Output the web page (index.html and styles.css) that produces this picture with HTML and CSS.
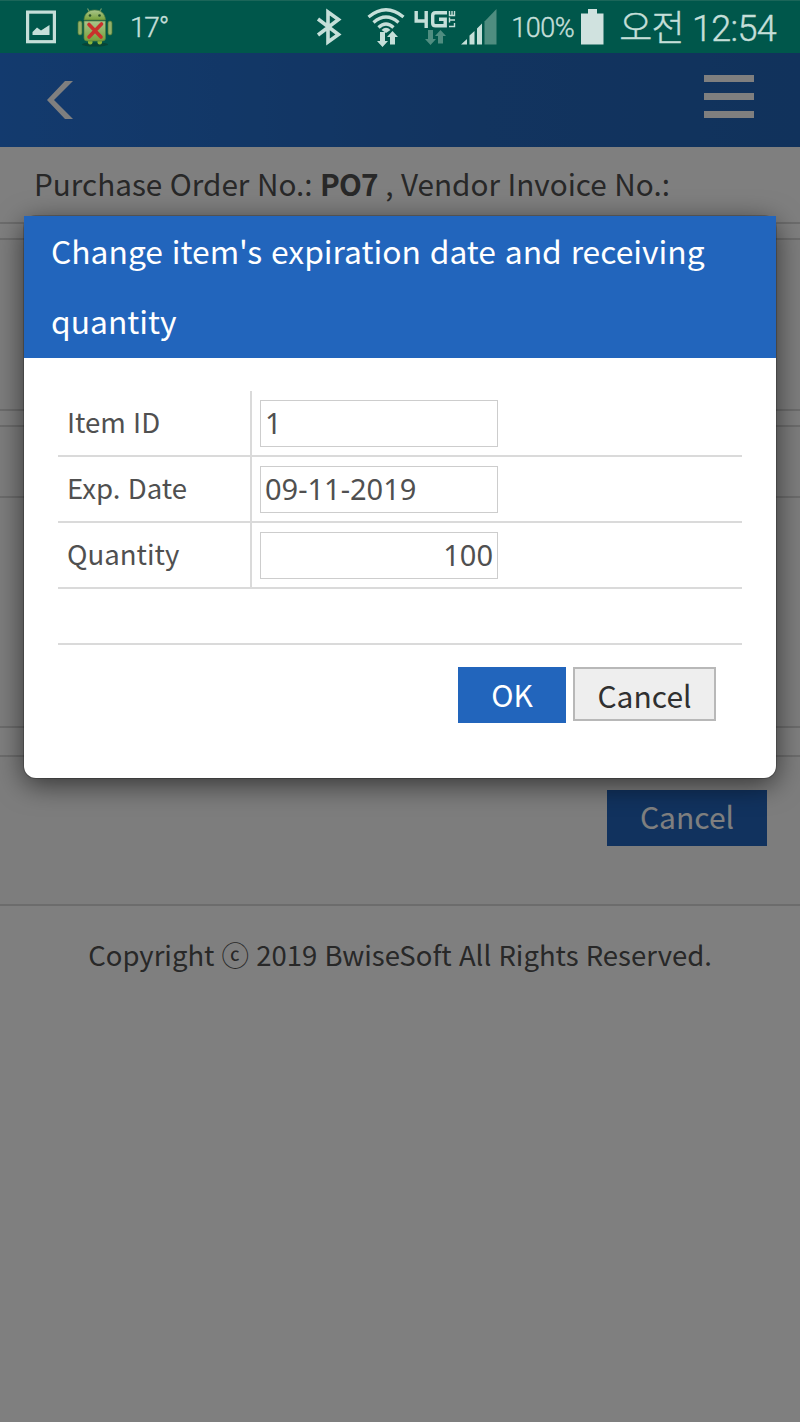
FILE: index.html
```html
<!DOCTYPE html>
<html lang="en">
<head>
  <meta charset="UTF-8">
  <meta name="viewport" content="width=device-width, initial-scale=1.0">
  <title>Receiving</title>
  <link rel="stylesheet" href="styles.css">
</head>
<body>

  <div class="status-bar">
    <svg class="icon-picture" width="30" height="34" viewBox="0 0 30 34">
      <rect x="1.6" y="2.1" width="26.8" height="29.6" fill="none" stroke="#c5dfd9" stroke-width="3.2"/>
      <path d="M6.500 25V22L11 17.500L15 20.500L23.500 15V25Z" fill="#c5dfd9"/>
    </svg>
    <svg class="icon-android" width="36" height="40" viewBox="0 0 36 40">
      <defs>
        <linearGradient id="droid" x1="0" y1="0" x2="0" y2="1">
          <stop offset="0" stop-color="#a9c48c"/>
          <stop offset="1" stop-color="#78a13a"/>
        </linearGradient>
      </defs>
      <ellipse cx="18" cy="37.500" rx="13" ry="2" fill="#064537"/>
      <path d="M10.500 1.500L12.500 5M24.500 1.500L22.500 5" stroke="#6f9a6a" stroke-width="1.200"/>
      <path d="M7 13C7.500 6 12 3 17.700 3S28 6 28.500 13Z" fill="url(#droid)" stroke="#58803f" stroke-width=".7"/>
      <circle cx="13" cy="8.500" r="1.300" fill="#28502a"/>
      <circle cx="22.500" cy="8.500" r="1.300" fill="#28502a"/>
      <rect x="1" y="14" width="4" height="14" rx="2" fill="#93b06a" stroke="#557b30" stroke-width=".7"/>
      <rect x="31" y="14" width="4" height="14" rx="2" fill="#93b06a" stroke="#557b30" stroke-width=".7"/>
      <rect x="11" y="32" width="4.500" height="5.500" rx="2" fill="#8ab53a"/>
      <rect x="20.500" y="32" width="4.500" height="5.500" rx="2" fill="#8ab53a"/>
      <path d="M7 14H28.500V31Q28.500 34 25.500 34H10Q7 34 7 31Z" fill="url(#droid)" stroke="#58803f" stroke-width=".7"/>
      <path d="M12 17.500L24 30M24.500 17L12 30" stroke="#c9302c" stroke-width="3.600" stroke-linecap="round"/>
    </svg>
    <span class="temperature">17°</span>

    <div class="status-right">
      <svg class="icon-bluetooth" width="26" height="38" viewBox="0 0 26 38">
        <path d="M2 11L22.500 26.500L12 34V4L22.500 11.500L2 27" fill="none" stroke="#c5dfd9" stroke-width="3.600"/>
      </svg>
      <svg class="icon-wifi" width="38" height="40" viewBox="0 0 38 40">
        <g fill="none" stroke="#c5dfd9" stroke-width="3.300">
          <path d="M1.500 10Q19-4.500 36.500 10"/>
          <path d="M6.500 15.500Q19 4.500 31.500 15.500"/>
          <path d="M11.500 20.500Q19 13.500 26.500 20.500"/>
        </g>
        <path d="M14.500 23Q19 18.500 23.500 23L19 26Z" fill="#c5dfd9"/>
        <path d="M13 25H18V34H21L15.500 40L10 34H13Z" fill="#c5dfd9"/>
        <path d="M23 37.500H28V30H31L25.500 24L20 30H23Z" fill="#c5dfd9"/>
      </svg>
      <svg class="icon-4g" width="42" height="38" viewBox="0 0 42 38">
        <path d="M2.200 3V13H13.500M12.200 3V20" fill="none" stroke="#c5dfd9" stroke-width="3.400"/>
        <path d="M33 4.700H21.500Q18.700 4.700 18.700 7.500V15Q18.700 17.800 21.500 17.800H31.200V11.200H25" fill="none" stroke="#c5dfd9" stroke-width="3.400"/>
        <path d="M35 18.500H40.500V15M35.500 9.500V14.500M35.500 12H41M35.500 3V7.500H40.500V3M38 3V7" fill="none" stroke="#c5dfd9" stroke-width="1.400"/>
        <path d="M14 22H19V31H22L16.500 37L11 31H14Z" fill="#4f8d80"/>
        <path d="M24 35.500H29V28H32L26.500 22L21 28H24Z" fill="#4f8d80"/>
      </svg>
      <svg class="icon-signal" width="36" height="36" viewBox="0 0 36 36">
        <path d="M23.500 12.500L35.500 0V35.500H23.500Z" fill="#4f8d80"/>
        <path d="M0 35.500L6 30V35.500ZM8.500 26.500L13.500 22V35.500H8.500ZM16 19.500L21 14.500V35.500H16Z" fill="#c5dfd9"/>
      </svg>
      <span class="battery-level">100%</span>
      <svg class="icon-battery" width="23" height="36" viewBox="0 0 23 36">
        <path d="M7 0H16V4.500H22.500V35.500H0V4.500H7Z" fill="#d0e2df"/>
      </svg>
      <span class="clock">오전 12:54</span>
    </div>
  </div>

  <div class="page">
    <header class="app-header">
      <svg class="icon-back" width="28" height="40" viewBox="0 0 28 40">
        <path d="M19 1H27L8 20L27 39H19L1 20Z" fill="#fff"/>
      </svg>
      <div class="menu">
        <span></span>
        <span></span>
        <span></span>
      </div>
    </header>

    <div class="order-info">Purchase Order No.: <b>PO7</b> , Vendor Invoice No.:</div>
    <div class="panel panel-item"></div>
    <div class="panel panel-total"></div>
    <div class="panel-list"></div>
    <div class="actions">
      <button type="button" class="btn btn-wide">Cancel</button>
    </div>
    <footer class="footer">Copyright ⓒ 2019 BwiseSoft All Rights Reserved.</footer>

    <div class="overlay">
      <div class="modal">
        <h3 class="modal-title">Change item's expiration date and receiving quantity</h3>
        <form class="modal-content">
          <div class="row">
            <label for="itemId">Item ID</label>
            <div class="field"><input type="text" id="itemId" value="1"></div>
          </div>
          <div class="row">
            <label for="expDate">Exp. Date</label>
            <div class="field"><input type="text" id="expDate" value="09-11-2019"></div>
          </div>
          <div class="row">
            <label for="quantity">Quantity</label>
            <div class="field"><input type="text" id="quantity" class="number" value="100"></div>
          </div>
          <div class="row row-empty"></div>
          <div class="modal-buttons">
            <button type="button" class="btn">OK</button>
            <button type="button" class="btn-cancel">Cancel</button>
          </div>
        </form>
      </div>
    </div>
  </div>

</body>
</html>
```

FILE: styles.css
```css
* {
  box-sizing: border-box;
}

body {
  margin: 0;
  height: 1422px;
  overflow: hidden;
  display: flex;
  flex-direction: column;
  font-family: "Noto Sans CJK KR", sans-serif;
  font-size: 28px;
  color: #505050;
  background-color: #fff;
}

/* phone status bar */
.status-bar {
  height: 53px;
  padding: 0 24px 0 26px;
  display: flex;
  align-items: center;
  background-color: #00574b;
  border-top: 1px solid #1b6659;
  color: #c5dfd9;
  font-family: Roboto, "Noto Sans CJK KR", sans-serif;
  font-weight: 300;
  -webkit-text-stroke: 0.4px #c5dfd9;
}

.icon-android {
  margin-left: 21px;
}

.temperature {
  margin-left: 17px;
  font-size: 28px;
  letter-spacing: -1.2px;
}

.status-right {
  margin-left: auto;
  display: flex;
  align-items: center;
}

.icon-wifi {
  margin-left: 25px;
}

.icon-4g {
  margin-left: 9px;
}

.icon-signal {
  margin-left: 5px;
}

.battery-level {
  margin-left: 14px;
  padding-top: 1px;
  font-size: 27px;
  line-height: 34px;
  letter-spacing: -0.5px;
}

.icon-battery {
  margin-left: 7px;
}

.clock {
  margin-left: 15px;
  padding-top: 3px;
  font-size: 36px;
  line-height: 48px;
  letter-spacing: -0.7px;
}

/* page */
.page {
  position: relative;
  flex: 1;
}

.app-header {
  height: 94px;
  padding: 0 46px;
  display: flex;
  justify-content: space-between;
  align-items: center;
  background: linear-gradient(to right, #2675dc, #2468bf 60%, #2265b8);
}

.menu {
  width: 50px;
  display: flex;
  flex-direction: column;
  gap: 11px;
  margin-top: -7px;
}

.menu span {
  height: 7px;
  background-color: #fff;
}

.order-info {
  height: 77px;
  padding-left: 34px;
  line-height: 74px;
  font-size: 29.7px;
  word-spacing: 0.9px;
  border-bottom: 2px solid #d9d9d9;
}

.order-info b {
  letter-spacing: -0.9px;
}

.panel {
  margin-top: 14px;
  border-top: 2px solid #d9d9d9;
  border-bottom: 2px solid #d9d9d9;
  background-color: #fafafa;
}

.panel-item {
  height: 173px;
}

.panel-total {
  height: 73px;
}

.panel-list {
  height: 230px;
  border-bottom: 2px solid #d9d9d9;
  background-color: #fafafa;
}

.actions {
  height: 151px;
  margin-top: 27px;
  padding: 33px 33px 0;
  border-top: 2px solid #d9d9d9;
  border-bottom: 2px solid #d9d9d9;
  background-color: #fafafa;
}

.btn {
  height: 56px;
  width: 108px;
  padding: 0 0 2px;
  border: none;
  background-color: #2265bc;
  color: #fff;
  font-family: inherit;
  font-size: 30px;
}

.btn-wide {
  display: block;
  width: 160px;
  margin-left: auto;
  padding-bottom: 4px;
}

.footer {
  padding-top: 28px;
  text-align: center;
  font-size: 27.5px;
  word-spacing: 1px;
}

/* modal */
.overlay {
  position: absolute;
  top: 0;
  left: 0;
  width: 100%;
  height: 100%;
  padding: 163px 24px 0;
  background-color: rgba(0, 0, 0, 0.5);
}

.modal {
  height: 562px;
  border-radius: 12px;
  background-color: #fff;
  box-shadow: 0 0 0 1px rgba(0, 0, 0, 0.2), 0 6px 28px rgba(0, 0, 0, 0.6);
}

.modal-title {
  margin: 0;
  height: 142px;
  padding: 0 27px;
  line-height: 69.5px;
  font-size: 31.8px;
  word-spacing: 1.7px;
  font-weight: normal;
  color: #fff;
  background-color: #2265bc;
}

.modal-content {
  padding: 33px 34px 0;
}

.row {
  height: 66px;
  display: flex;
  border-bottom: 2px solid #dadada;
}

.row label {
  width: 194px;
  padding-left: 9px;
  line-height: 61px;
  font-size: 27.6px;
  word-spacing: 1px;
  border-right: 2px solid #dadada;
}

.field {
  padding: 9px 8px;
}

.field input {
  display: block;
  width: 238px;
  height: 47px;
  padding: 0 4px 2px;
  border: 1px solid #cdcdcd;
  color: #505050;
  font-family: "Noto Sans", sans-serif;
  font-size: 29px;
}

.field .number {
  text-align: right;
}

.row-empty {
  height: 56px;
}

.modal-buttons {
  padding: 22px 26px 0 0;
  display: flex;
  justify-content: flex-end;
  gap: 7px;
}

.btn-cancel {
  width: 143px;
  height: 54px;
  padding: 1px 0 0;
  border: 2px solid #b8b8b8;
  background-color: #eee;
  color: #303030;
  font-family: inherit;
  font-size: 30px;
}
```
